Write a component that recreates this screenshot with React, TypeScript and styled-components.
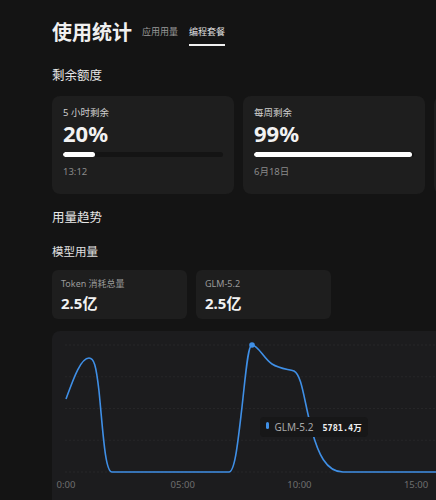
import styled, { createGlobalStyle } from 'styled-components';

const GlobalStyle = createGlobalStyle`
  body {
    margin: 0;
    background: #141414;
    overflow: hidden;
    font-family: "Noto Sans", "Noto Sans CJK SC", sans-serif;
    color: #e8e8e8;
  }
`;

interface Quota {
  label: string;
  percent: number;
  reset: string;
}

const quotas: Quota[] = [
  { label: '5 小时剩余', percent: 20, reset: '13:12' },
  { label: '每周剩余', percent: 99, reset: '6月18日' },
];

const totals = [
  { label: 'Token 消耗总量', value: '2.5亿' },
  { label: 'GLM-5.2', value: '2.5亿' },
];

const hours = ['0:00', '05:00', '10:00', '15:00'];

const LINE =
  'M14 68 C20 52, 28 27, 37 27 C42 27, 44 34, 47 60 C51 100, 53 141, 60 141 L177 141 ' +
  'C183 141, 186 110, 190 76 C194 40, 196 14, 200 14 C206 14, 212 28, 220 33 ' +
  'C228 38, 236 38, 242 40 C250 44, 252 70, 260 100 C266 122, 274 141, 291 141 L460 141';

const App = () => {
  return (
    <>
      <GlobalStyle />
      <SPage>
        <SHeader>
          <STitle>使用统计</STitle>
          <STabs>
            <STab>应用用量</STab>
            <STab $active>编程套餐</STab>
          </STabs>
        </SHeader>

        <SSectionTitle $top={21}>剩余额度</SSectionTitle>
        <SQuotaRow>
          {quotas.map((q) => (
            <SQuotaCard key={q.label}>
              <SQuotaLabel>{q.label}</SQuotaLabel>
              <SQuotaValue>{q.percent}%</SQuotaValue>
              <SBar>
                <SBarFill style={{ width: `${q.percent}%` }} />
              </SBar>
              <SReset>{q.reset}</SReset>
            </SQuotaCard>
          ))}
          {/* next card, scrolled off to the right */}
          <SQuotaCard />
        </SQuotaRow>

        <SSectionTitle $top={15}>用量趋势</SSectionTitle>
        <SSubTitle>模型用量</SSubTitle>
        <STotalRow>
          {totals.map((t) => (
            <STotalCard key={t.label}>
              <STotalLabel>{t.label}</STotalLabel>
              <STotalValue>{t.value}</STotalValue>
            </STotalCard>
          ))}
        </STotalRow>

        <SChartCard>
          <svg width="470" height="170" viewBox="0 0 470 170">
            {[14, 45.75, 77.5, 109.25, 141].map((y) => (
              <line
                key={y}
                x1="13"
                x2="470"
                y1={y}
                y2={y}
                stroke="#262628"
                strokeWidth="1"
                strokeDasharray="2 2"
              />
            ))}
            <path d={LINE} fill="none" stroke="#3f8fe6" strokeWidth="1.6" />
            <circle cx="200" cy="14" r="2.8" fill="#3f8fe6" />
            {hours.map((h, i) => (
              <text
                key={h}
                x={14 + i * 116.7}
                y="157"
                fill="#6f6f6f"
                fontSize="9.5"
                textAnchor="middle"
                fontFamily="Noto Sans, sans-serif"
              >
                {h}
              </text>
            ))}
          </svg>
          <STooltip>
            <STooltipMark />
            <STooltipName>GLM-5.2</STooltipName>
            <STooltipValue>5781.4万</STooltipValue>
          </STooltip>
        </SChartCard>
      </SPage>
    </>
  );
};

export default App;

const SPage = styled.div`
  width: 760px;
  padding: 20px 0 0 52px;
`;

const SHeader = styled.header`
  display: flex;
  align-items: center;
  gap: 10px;
`;

const STitle = styled.h1`
  margin: 0;
  font-size: 20px;
  line-height: 24px;
  font-weight: 700;
  color: #f0f0f0;
`;

const STabs = styled.nav`
  display: flex;
  gap: 11px;
`;

const STab = styled.span<{ $active?: boolean }>`
  padding: 6px 0;
  font-size: 9px;
  line-height: 12px;
  color: ${({ $active }) => ($active ? '#e0e0e0' : '#9a9a9a')};
  border-bottom: 2px solid ${({ $active }) => ($active ? '#f0f0f0' : 'transparent')};
`;

const SSectionTitle = styled.h2<{ $top: number }>`
  margin: ${({ $top }) => $top}px 0 0;
  font-size: 12.5px;
  line-height: 18px;
  font-weight: 400;
  color: #e6e6e6;
`;

const SSubTitle = styled.h3`
  margin: 17px 0 0;
  font-size: 11.5px;
  line-height: 16px;
  font-weight: 400;
  color: #e0e0e0;
`;

const SQuotaRow = styled.div`
  display: flex;
  gap: 9px;
  margin-top: 11px;
`;

const SQuotaCard = styled.div`
  box-sizing: border-box;
  width: 182px;
  height: 98px;
  padding: 10px 11px;
  background: #1e1e1e;
  border-radius: 8px;
`;

const SQuotaLabel = styled.div`
  font-size: 9.5px;
  line-height: 14px;
  color: #cfcfcf;
`;

const SQuotaValue = styled.div`
  font-size: 22px;
  line-height: 26px;
  font-weight: 700;
  color: #f2f2f2;
`;

const SBar = styled.div`
  height: 5px;
  margin-top: 6px;
  background: #141414;
  border-radius: 3px;
  overflow: hidden;
`;

const SBarFill = styled.div`
  height: 100%;
  background: #ffffff;
  border-radius: 3px;
`;

const SReset = styled.div`
  margin-top: 8px;
  font-size: 9.5px;
  line-height: 14px;
  color: #8a8a8a;
`;

const STotalRow = styled.div`
  display: flex;
  gap: 9px;
  margin-top: 10px;
`;

const STotalCard = styled.div`
  box-sizing: border-box;
  width: 135px;
  height: 49px;
  padding: 7px 9px 0;
  background: #1e1e1e;
  border-radius: 6px;
`;

const STotalLabel = styled.div`
  font-size: 9px;
  line-height: 13px;
  color: #9a9a9a;
`;

const STotalValue = styled.div`
  margin-top: 3px;
  font-size: 15px;
  line-height: 20px;
  font-weight: 700;
  color: #f2f2f2;
`;

const SChartCard = styled.div`
  position: relative;
  width: 470px;
  height: 180px;
  margin-top: 12px;
  background: #1c1c1e;
  border-radius: 8px;
  svg {
    display: block;
  }
`;

const STooltip = styled.div`
  position: absolute;
  left: 208px;
  top: 86px;
  display: flex;
  align-items: center;
  height: 20px;
  padding: 0 6px;
  gap: 6px;
  background: #171718;
  border-radius: 4px;
`;

const STooltipMark = styled.span`
  width: 2.5px;
  height: 7px;
  margin-top: -4px;
  background: #3f8fe6;
  border-radius: 2px;
`;

const STooltipName = styled.span`
  font-size: 10px;
  color: #a8a8a8;
`;

const STooltipValue = styled.span`
  margin-left: 3px;
  font-family: "DejaVu Sans Mono", "Noto Sans CJK SC", monospace;
  font-size: 8.5px;
  font-weight: 700;
  color: #f0f0f0;
`;
